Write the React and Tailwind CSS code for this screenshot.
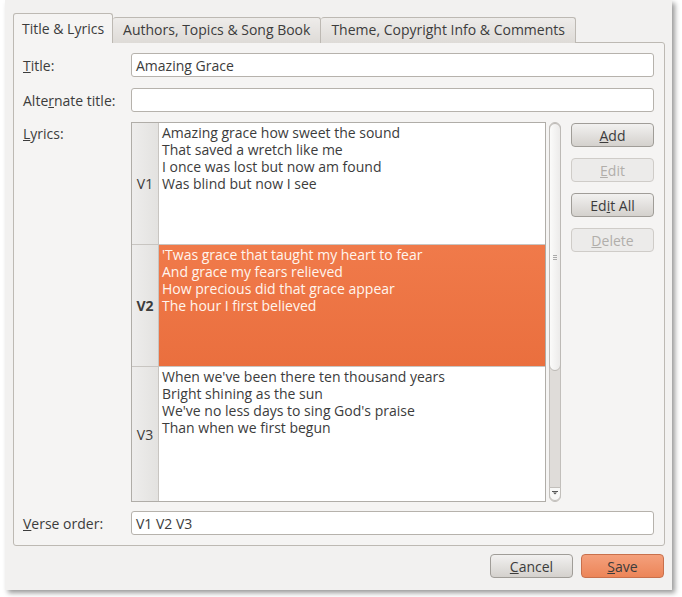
import React from 'react';

const verses = [
  {
    tag: 'V1',
    h: 'h-[121px]',
    lines: [
      'Amazing grace how sweet the sound',
      'That saved a wretch like me',
      'I once was lost but now am found',
      'Was blind but now I see',
    ],
  },
  {
    tag: 'V2',
    h: 'h-[122px]',
    selected: true,
    lines: [
      "'Twas grace that taught my heart to fear",
      'And grace my fears relieved',
      'How precious did that grace appear',
      'The hour I first believed',
    ],
  },
  {
    tag: 'V3',
    h: 'flex-1',
    lines: [
      "When we've been there ten thousand years",
      'Bright shining as the sun',
      "We've no less days to sing God's praise",
      'Than when we first begun',
    ],
  },
];

const Btn = ({ children, disabled, orange, className = '' }) => (
  <div
    className={`h-[24px] w-[83px] flex items-center justify-center rounded-[4px] border text-[14px] ${
      orange
        ? 'border-[#c8704c] bg-gradient-to-b from-[#f4a07c] to-[#ec8558] text-[#3c3c3c]'
        : disabled
        ? 'border-[#cfccc8] bg-[#ecebea] text-[#b1aeaa]'
        : 'border-[#a09d98] bg-gradient-to-b from-[#f2f1f0] to-[#d4d1cd] text-[#3c3c3c]'
    } ${className}`}
  >
    {children}
  </div>
);

const Field = ({ value }) => (
  <div className="flex-1 h-[24px] rounded-[3px] border border-[#b6b2ac] bg-white px-[4px] flex items-center text-[14px] text-[#3c3c3c]">
    {value}
  </div>
);

export default function App() {
  return (
    <div className="min-h-[597px] bg-white font-['Open_Sans',sans-serif] text-[14px] text-[#3c3c3c]">
      <div className="ml-[5px] w-[667px] h-[590px] bg-[#f2f1f0] shadow-[3px_3px_5px_rgba(0,0,0,0.4)] pt-[13px] pl-[8px] pr-[7px] flex flex-col">
        {/* TABS */}
        <div className="flex items-end h-[30px] relative z-10">
          <div className="h-[30px] px-[8px] flex items-center rounded-t-[3px] border border-b-0 border-[#bdb9b3] bg-[#f5f4f3]">
            Title &amp; Lyrics
          </div>
          <div className="h-[26px] px-[10px] pb-[2px] flex items-center rounded-t-[3px] border border-b-0 border-l-0 border-[#bdb9b3] bg-gradient-to-b from-[#eeecea] to-[#dedbd7]">
            Authors, Topics &amp; Song Book
          </div>
          <div className="h-[26px] px-[10px] pb-[2px] flex items-center rounded-t-[3px] border border-b-0 border-l-0 border-[#bdb9b3] bg-gradient-to-b from-[#eeecea] to-[#dedbd7]">
            Theme, Copyright Info &amp; Comments
          </div>
        </div>

        {/* FRAME */}
        <div className="-mt-px h-[504px] border border-[#bdb9b3] rounded-b-[3px] rounded-tr-[3px] bg-[#f5f4f3] pt-[10px] pl-[9px] pr-[10px] flex flex-col">
          <div className="flex items-center">
            <div className="w-[108px]">
              <u>T</u>itle:
            </div>
            <Field value="Amazing Grace" />
          </div>

          <div className="flex items-center mt-[11px]">
            <div className="w-[108px]">
              Alte<u>r</u>nate title:
            </div>
            <Field value="" />
          </div>

          <div className="flex mt-[10px] h-[380px]">
            <div className="w-[108px] pt-[1px]">
              <u>L</u>yrics:
            </div>

            {/* TABLE */}
            <div className="w-[415px] h-[380px] border border-[#b0ada8] bg-white flex flex-col">
              {verses.map((v, i) => (
                <div
                  key={v.tag}
                  className={`flex ${v.h} ${i > 0 ? 'border-t border-[#c8c5c1]' : ''}`}
                >
                  <div
                    className={`w-[27px] shrink-0 border-r border-[#c8c5c1] bg-gradient-to-r from-[#eeedec] to-[#e3e2e0] flex items-center justify-center text-[#3c3c3c] ${
                      v.selected ? 'font-bold' : ''
                    }`}
                  >
                    {v.tag}
                  </div>
                  <div
                    className={`flex-1 pl-[3px] pt-[1px] leading-[17px] ${
                      v.selected
                        ? 'bg-gradient-to-b from-[#f07a4a] to-[#ea6f3e] text-[#fff5ee]'
                        : 'text-[#3c3c3c]'
                    }`}
                  >
                    {v.lines.map((l) => (
                      <div key={l}>{l}</div>
                    ))}
                  </div>
                </div>
              ))}
            </div>

            {/* SCROLLBAR */}
            <div className="ml-[3px] w-[12px] h-[380px] rounded-full border border-[#c2bfbb] bg-[#dfdcd9] flex flex-col items-center relative">
              <div className="w-[12px] -mx-px h-[248px] rounded-full border border-[#bdbab6] bg-gradient-to-r from-[#fbfbfa] to-[#ecebea] flex flex-col items-center justify-end pb-[110px]">
                <div className="w-[4px] h-[1px] bg-[#aaa] mb-[1px]" />
                <div className="w-[4px] h-[1px] bg-[#aaa] mb-[1px]" />
                <div className="w-[4px] h-[1px] bg-[#aaa]" />
              </div>
              <div className="absolute bottom-0 -left-px w-[12px] h-[14px] rounded-b-full border border-[#c2bfbb] bg-[#f8f8f7] flex items-start justify-center pt-[3px]">
                <svg width="6" height="4" viewBox="0 0 6 4">
                  <rect x="0" y="0" width="6" height="1" fill="#555" />
                  <path d="M1 1.5 L5 1.5 L3 3.5 Z" fill="#555" />
                </svg>
              </div>
            </div>

            {/* SIDE BUTTONS */}
            <div className="ml-[10px] pt-[1px] flex flex-col gap-[11px]">
              <Btn>
                <u>A</u>dd
              </Btn>
              <Btn disabled>
                <u>E</u>dit
              </Btn>
              <Btn>
                Ed<u>i</u>t All
              </Btn>
              <Btn disabled>
                <u>D</u>elete
              </Btn>
            </div>
          </div>

          <div className="flex items-center mt-[9px]">
            <div className="w-[108px]">
              <u>V</u>erse order:
            </div>
            <Field value="V1 V2 V3" />
          </div>
        </div>

        {/* BOTTOM BUTTONS */}
        <div className="flex justify-end gap-[8px] mt-[8px] pr-[1px]">
          <Btn>
            <u>C</u>ancel
          </Btn>
          <Btn orange>
            <u>S</u>ave
          </Btn>
        </div>
      </div>
    </div>
  );
}
